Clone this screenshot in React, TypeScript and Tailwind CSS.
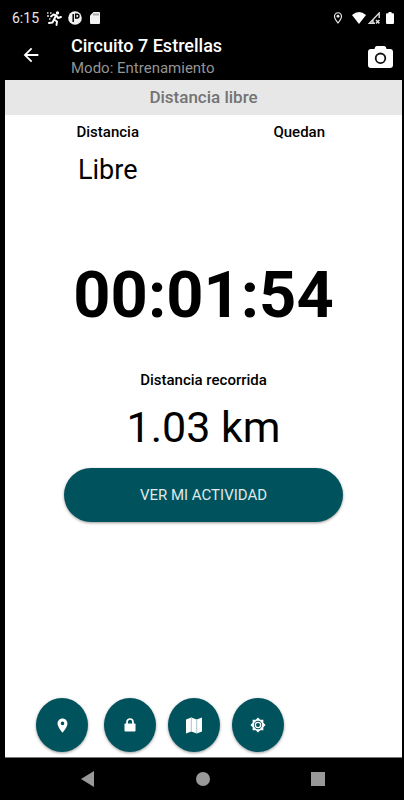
import { useState } from "react";
import { MdArrowBack, MdLocationOn, MdOutlineLocationOn } from "react-icons/md";

function PinIcon() {
  return <MdLocationOn size={17} />;
}

function LockIcon() {
  return (
    <svg width="12" height="14" viewBox="0 0 12 14">
      <path d="M3 6.500V4a3 3 0 0 1 6 0v2.500" fill="none" stroke="#fff" strokeWidth="1.700" />
      <rect x="0.500" y="5.500" width="11" height="8" rx="0.800" fill="#fff" />
    </svg>
  );
}

function MapIcon() {
  return (
    <svg width="16" height="17" viewBox="0 0 16 17">
      <path d="M0 2.500 5.300.5l5.400 2L16 .5v14l-5.300 2-5.400-2-5.300 2z" fill="#fff" />
      <path d="M5.300.5v14M10.700 2.500v14" stroke="#8fb5ba" strokeWidth="0.800" />
    </svg>
  );
}

function BrightnessIcon() {
  return (
    <svg width="16" height="16" viewBox="0 0 24 24">
      <path
        d="M20 8.690V4h-4.690L12 .690 8.690 4H4v4.690L.690 12 4 15.310V20h4.690L12 23.310 15.310 20H20v-4.690L23.310 12z"
        fill="#fff"
      />
      <circle cx="12" cy="12" r="6.200" fill="#00535d" />
      <circle cx="12" cy="12" r="4" fill="none" stroke="#fff" strokeWidth="2" />
    </svg>
  );
}

const actions = [
  { label: "Ubicación", icon: PinIcon },
  { label: "Bloquear", icon: LockIcon },
  { label: "Mapa", icon: MapIcon },
  { label: "Brillo", icon: BrightnessIcon },
];

function StatusBar() {
  return (
    <div className="flex h-[30px] items-end justify-between pr-2 pl-[7px] text-[#e8e8e8]">
      <div className="flex h-6 items-center">
        <span className="w-[34px] text-[14px] leading-6">6:15</span>
        <svg className="mr-[6px]" width="16" height="15" viewBox="0 0 16 15">
          <path d="M1 2h1.500M4 2h1.500M1 5h2M3 8h1.500" stroke="#ddd" strokeWidth="1.500" />
          <circle cx="11.500" cy="1.900" r="1.700" fill="#fff" />
          <path
            d="M5 5.500 7.500 3.500 10.500 4.500 12 7 15 6M10 4.500 8 8.500 11 10.500 10.500 14M8 8.500 6.500 11.500 3 12"
            fill="none"
            stroke="#fff"
            strokeWidth="1.900"
            strokeLinejoin="round"
            strokeLinecap="round"
          />
        </svg>
        <svg className="mr-2" width="14" height="14" viewBox="0 0 14 14">
          <circle cx="7" cy="7" r="6.800" fill="#f2f2f2" />
          <path d="M5.200 3v8M7.700 3.300h1.800q1.500 0 1.500 1.800T9.500 7H7.700z" fill="none" stroke="#000" strokeWidth="1.500" />
        </svg>
        <svg width="10" height="12" viewBox="0 0 10 12">
          <path d="M3.500 0H9q1 0 1 1v10q0 1-1 1H1q-1 0-1-1V3.500z" fill="#f2f2f2" />
          <path d="M4 1.500v2M6 1.500v2M8 1.500v2" stroke="#555" strokeWidth="0.900" />
        </svg>
      </div>
      <div className="flex h-6 items-center">
        <MdOutlineLocationOn className="mr-[7px]" size={14} />
        <svg className="mr-[2px]" width="14" height="12" viewBox="0 0 14 12" fill="#fff">
          <path d="M0 3Q7-3 14 3L7 12z" />
        </svg>
        <svg className="mr-[6px]" width="12" height="12" viewBox="0 0 12 12">
          <path d="M7 11.200H1.500L11.200 1v5M5 11V8" fill="none" stroke="#ddd" strokeWidth="1.400" />
          <path d="m8 8 3.400 3.400M11.400 8 8 11.400" stroke="#ddd" strokeWidth="1.500" />
        </svg>
        <svg width="8" height="12" viewBox="0 0 8 12" fill="#fff">
          <path d="M2.500 0h3v1.300H7a1 1 0 0 1 1 1V11a1 1 0 0 1-1 1H1a1 1 0 0 1-1-1V2.300a1 1 0 0 1 1-1h1.500z" />
        </svg>
      </div>
    </div>
  );
}

function Header() {
  return (
    <header className="flex h-[50px] items-center pr-[9px] pl-[15px]">
      <button type="button" aria-label="Volver" className="text-white">
        <MdArrowBack size={22} />
      </button>
      <div className="ml-[29px] flex-1 pt-1">
        <h1 className="text-[18px] leading-[22px] font-medium text-white">Circuito 7 Estrellas</h1>
        <p className="text-[15px] leading-[22px] text-[#949494]">Modo: Entrenamiento</p>
      </div>
      <button type="button" aria-label="Cámara" className="pt-1">
        <svg width="25" height="22" viewBox="0 0 25 22">
          <path
            d="M3 3h3.500q.5-3 2.500-3h7q2 0 2.500 3H22q3 0 3 3v13q0 3-3 3H3q-3 0-3-3V6q0-3 3-3z"
            fill="#fff"
          />
          <circle cx="12.500" cy="12.300" r="4.800" fill="none" stroke="#111" strokeWidth="1.800" />
        </svg>
      </button>
    </header>
  );
}

function NavBar() {
  return (
    <nav className="flex h-[42px] items-center justify-between pr-[77px] pl-[76px]">
      <button type="button" aria-label="Atrás">
        <svg width="13" height="16" viewBox="0 0 13 16" fill="#999">
          <path d="M13 0v16L0 8z" />
        </svg>
      </button>
      <button type="button" aria-label="Inicio" className="size-[14px] rounded-full bg-[#999]" />
      <button type="button" aria-label="Recientes" className="size-[14px] bg-[#999]" />
    </nav>
  );
}

export default function App() {
  const [distance] = useState("1.03 km");
  const [elapsed] = useState("00:01:54");

  return (
    <div className="flex min-h-screen flex-col bg-black pr-[2px] pl-[5px] font-['Roboto',sans-serif]">
      <StatusBar />
      <Header />
      <main className="flex flex-1 flex-col border-b border-[#777] bg-white text-black">
        <h2 className="bg-[#e7e7e7] text-center text-[17px] leading-[35px] font-medium text-[#737373]">
          Distancia libre
        </h2>
        <div className="grid grid-cols-2 px-[7px] pt-[6px] text-center">
          <div>
            <p className="text-[15px] leading-[22px] font-medium">Distancia</p>
            <p className="pt-2 text-[27px] leading-[38px]">Libre</p>
          </div>
          <p className="text-[15px] leading-[22px] font-medium">Quedan</p>
        </div>
        <p className="mt-[68px] text-center text-[65px] leading-[76px] font-bold">{elapsed}</p>
        <p className="mt-9 text-center text-[15px] leading-[22px] font-medium">
          Distancia recorrida
        </p>
        <p className="mt-2 text-center text-[43px] leading-[56px]">{distance}</p>
        <button
          type="button"
          className="mx-[59px] mt-[13px] h-[54px] rounded-full bg-[#00535d] text-[15px] text-[#dfe9ea] shadow-[0_1px_3px_rgba(0,0,0,0.4)]"
        >
          VER MI ACTIVIDAD
        </button>
        <div className="mt-auto flex gap-3 pb-[5px] pl-[31px]">
          {actions.map(({ label, icon: Icon }) => (
            <button
              key={label}
              type="button"
              aria-label={label}
              className="flex h-[54px] w-[52px] items-center justify-center rounded-[50%] bg-[#00535d] text-white shadow-[0_1px_3px_rgba(0,0,0,0.4)] first:mr-1"
            >
              <Icon />
            </button>
          ))}
        </div>
      </main>
      <NavBar />
    </div>
  );
}
